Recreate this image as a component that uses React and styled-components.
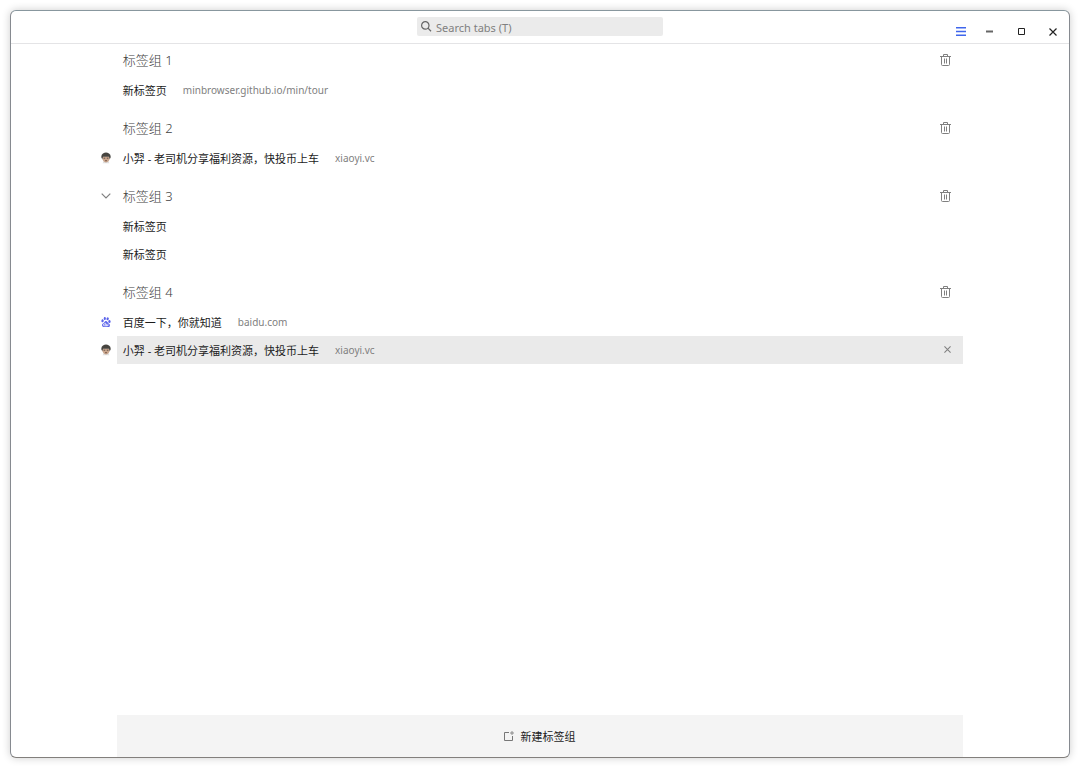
import React from "react";
import styled, { createGlobalStyle } from "styled-components";
import { SiBaidu } from "react-icons/si";

const GlobalStyle = createGlobalStyle`
  *, *::before, *::after { box-sizing: border-box; }
  body {
    margin: 0;
    background: #fff;
    color: #1c1c1c;
    font-family: "Noto Sans", "Noto Sans CJK SC", sans-serif;
    font-size: 11px;
  }
  button {
    border: 0;
    padding: 0;
    background: none;
    color: inherit;
    font: inherit;
    cursor: pointer;
  }
  svg { display: block; }
`;

const Page = styled.div`
  display: flex;
  min-height: 100vh;
  padding: 10px;
`;

const Window = styled.div`
  display: flex;
  flex: 1;
  min-width: 0;
  flex-direction: column;
  overflow: hidden;
  border: 1px solid #868a90;
  border-top-color: #88979e;
  border-bottom-color: #827f7c;
  border-radius: 6px;
  background: #fff;
  box-shadow: 0 0 8px rgba(0, 0, 0, 0.2);
`;

const TitleBar = styled.header`
  display: grid;
  grid-template-columns: 1fr 246px 1fr;
  height: 33px;
  border-bottom: 1px solid #e4e4e6;
`;

const SearchBox = styled.label`
  display: flex;
  grid-column: 2;
  align-items: center;
  gap: 4px;
  height: 19px;
  margin-top: 6px;
  padding-left: 4px;
  border-radius: 2px;
  background: #ebebeb;
  color: #666;
`;

const SearchInput = styled.input`
  flex: 1;
  min-width: 0;
  height: 19px;
  padding: 1px 0 0;
  border: 0;
  outline: 0;
  background: none;
  color: #333;
  font: inherit;
  &::placeholder { color: #808080; opacity: 1; }
`;

const Controls = styled.div`
  display: flex;
  justify-content: flex-end;
  padding-top: 8px;
`;

const ControlButton = styled.button`
  display: grid;
  place-items: center;
  width: ${(p) => (p.$narrow ? 24 : 32)}px;
  height: 25px;
  color: #222;
`;

const TaskList = styled.main`
  display: flex;
  flex: 1;
  flex-direction: column;
  gap: 8px;
`;

const Line = styled.div`
  display: grid;
  grid-template-columns: 10% minmax(0, 1fr) 10%;
`;

const Gutter = styled.div`
  display: flex;
  align-items: center;
  justify-content: flex-end;
  padding-right: 6px;
`;

const GroupHead = styled.div`
  display: flex;
  align-items: center;
  justify-content: space-between;
  height: 32px;
  padding: 0 12px 0 6px;
`;

const GroupName = styled.h2`
  margin: 0;
  color: #404040;
  font-size: 13px;
  font-weight: 300;
  line-height: 20px;
`;

const IconButton = styled.button`
  color: #808080;
`;

const TabList = styled.ul`
  margin: 0;
  padding: 0;
  list-style: none;
`;

const TabRow = styled.div`
  display: flex;
  align-items: center;
  height: 28px;
  padding: 0 12px 2px 6px;
  background: ${(p) => (p.$selected ? "#eaeaea" : "transparent")};
`;

const TabButton = styled.button`
  display: flex;
  flex: 1;
  min-width: 0;
  gap: 16px;
  padding-top: 4px;
  line-height: 16px;
  text-align: left;
  white-space: nowrap;
`;

const TabUrl = styled.span`
  color: #808080;
  font-size: 10px;
  line-height: 14px;
`;

const Footer = styled.footer`
  display: flex;
  justify-content: center;
`;

const NewGroupButton = styled.button`
  display: flex;
  align-items: center;
  justify-content: center;
  gap: 6px;
  width: 80%;
  height: 42px;
  background: #f4f4f4;
`;

const SearchIcon = () => (
  <svg width="11" height="11" viewBox="0 0 11 11" fill="none" stroke="currentColor" aria-hidden="true">
    <circle cx="4.3" cy="4.4" r="3.7" strokeWidth="1.2" />
    <path d="M7 7.100 10 10.200" strokeWidth="1.3" />
  </svg>
);

const TrashIcon = () => (
  <svg width="11" height="12" viewBox="0 0 11 12" fill="none" stroke="currentColor" aria-hidden="true">
    <path d="M0 2.500h11M3.500 2V.500h4V2M1.500 2.500v8q0 1 1 1h6q1 0 1-1v-8" />
    <path d="M4.500 4.500v5M6.500 4.500v5" />
  </svg>
);

const CloseIcon = ({ size }) => (
  <svg width={size} height={size} viewBox="0 0 8 8" fill="none" stroke="currentColor" aria-hidden="true">
    <path d="M.5.5l7 7M7.5.5l-7 7" strokeWidth="1.2" />
  </svg>
);

const ChevronIcon = () => (
  <svg width="10" height="6" viewBox="0 0 10 6" fill="none" stroke="currentColor" aria-hidden="true">
    <path d="M.7.7 5 5 9.3.7" strokeWidth="1.2" />
  </svg>
);

const MenuIcon = () => (
  <svg width="10" height="9" viewBox="0 0 10 9" fill="none" stroke="#3f66ec" strokeWidth="1.4" aria-hidden="true">
    <path d="M0 .7h10M0 4.5h10M0 8.300h10" />
  </svg>
);

const MinimizeIcon = () => (
  <svg width="7" height="3" viewBox="0 0 7 3" aria-hidden="true">
    <path d="M0 .5h7v2H0z" fill="#666" />
  </svg>
);

const MaximizeIcon = () => (
  <svg width="7" height="7" viewBox="0 0 7 7" fill="none" stroke="currentColor" aria-hidden="true">
    <path d="M.5.5h6v6h-6z" />
  </svg>
);

const NewGroupIcon = () => (
  <svg width="10" height="10" viewBox="0 0 10 10" fill="none" stroke="#777" aria-hidden="true">
    <path d="M5 1.5H.5v8h8V5" />
    <path d="M8 0v4M6 2h4" strokeWidth=".8" />
  </svg>
);

const AvatarIcon = () => (
  <svg width="10" height="12" viewBox="0 0 10 12" aria-hidden="true">
    <path d="M3 9h4l1.5 2.2h-7z" fill="#ddd" />
    <path d="M1.500 4.500h7v3Q8 10 5 10.400 2 10 1.500 7.500z" fill="#c9a68d" />
    <path d="M.5 6Q-.2 2.800 2 1.500 5-.6 8 1.500 10.200 2.800 9.500 6L8.500 7 8 4.800H2L1.500 7z" fill="#474540" />
    <path d="M2.600 6.200h1.600M5.800 6.200h1.600" stroke="#655247" />
    <path d="M4 8.700h2" stroke="#7d5c4c" />
  </svg>
);

const favicons = {
  avatar: <AvatarIcon />,
  baidu: <SiBaidu size={10} color="#5a63ea" aria-hidden="true" />,
};

const xiaoyi = {
  title: "小羿 - 老司机分享福利资源，快投币上车",
  url: "xiaoyi.vc",
  icon: "avatar",
};

const groups = [
  { name: "标签组 1", tabs: [{ title: "新标签页", url: "minbrowser.github.io/min/tour" }] },
  { name: "标签组 2", tabs: [xiaoyi] },
  { name: "标签组 3", expandable: true, tabs: [{ title: "新标签页" }, { title: "新标签页" }] },
  {
    name: "标签组 4",
    tabs: [
      { title: "百度一下，你就知道", url: "baidu.com", icon: "baidu" },
      { ...xiaoyi, selected: true },
    ],
  },
];

function TabItem({ tab }) {
  return (
    <Line as="li">
      <Gutter>{favicons[tab.icon]}</Gutter>
      <TabRow $selected={tab.selected}>
        <TabButton type="button">
          <span>{tab.title}</span>
          {tab.url && <TabUrl>{tab.url}</TabUrl>}
        </TabButton>
        {tab.selected && (
          <IconButton type="button" aria-label="关闭标签页">
            <CloseIcon size={7} />
          </IconButton>
        )}
      </TabRow>
    </Line>
  );
}

function Group({ group }) {
  return (
    <section>
      <Line>
        <Gutter>
          {group.expandable && (
            <IconButton type="button" aria-label="折叠标签组">
              <ChevronIcon />
            </IconButton>
          )}
        </Gutter>
        <GroupHead>
          <GroupName>{group.name}</GroupName>
          <IconButton type="button" aria-label="删除标签组">
            <TrashIcon />
          </IconButton>
        </GroupHead>
      </Line>
      <TabList>
        {group.tabs.map((tab, i) => (
          <TabItem key={i} tab={tab} />
        ))}
      </TabList>
    </section>
  );
}

export default function App() {
  return (
    <Page>
      <GlobalStyle />
      <Window>
        <TitleBar>
          <SearchBox>
            <SearchIcon />
            <SearchInput type="text" placeholder="Search tabs (T)" aria-label="Search tabs" />
          </SearchBox>
          <Controls>
            <ControlButton type="button" aria-label="菜单" $narrow>
              <MenuIcon />
            </ControlButton>
            <ControlButton type="button" aria-label="最小化">
              <MinimizeIcon />
            </ControlButton>
            <ControlButton type="button" aria-label="最大化">
              <MaximizeIcon />
            </ControlButton>
            <ControlButton type="button" aria-label="关闭">
              <CloseIcon size={8} />
            </ControlButton>
          </Controls>
        </TitleBar>
        <TaskList>
          {groups.map((group) => (
            <Group key={group.name} group={group} />
          ))}
        </TaskList>
        <Footer>
          <NewGroupButton type="button">
            <NewGroupIcon />
            <span>新建标签组</span>
          </NewGroupButton>
        </Footer>
      </Window>
    </Page>
  );
}
